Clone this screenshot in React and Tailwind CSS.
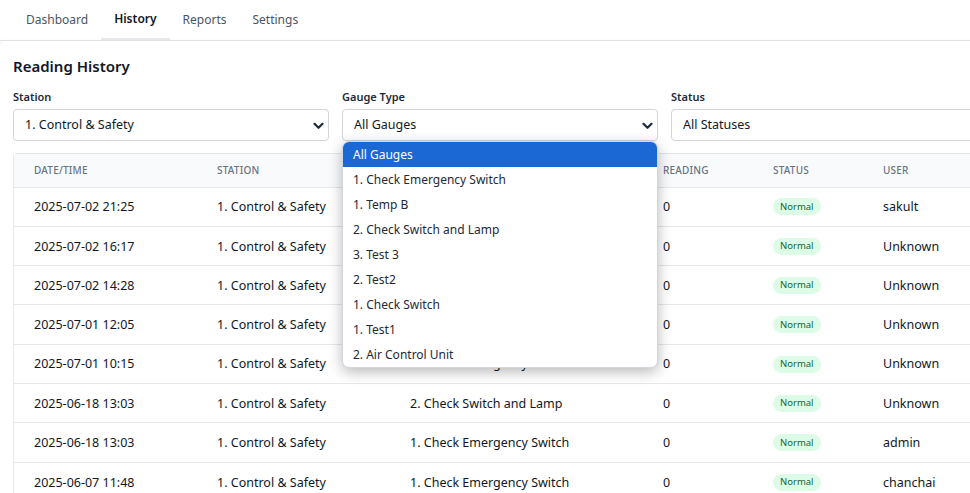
import React from 'react';

const FONT = { fontFamily: '"Segoe UI", "Noto Sans", "Open Sans", sans-serif' };

const tabs = ['Dashboard', 'History', 'Reports', 'Settings'];

const gaugeOptions = [
  'All Gauges',
  '1. Check Emergency Switch',
  '1. Temp B',
  '2. Check Switch and Lamp',
  '3. Test 3',
  '2. Test2',
  '1. Check Switch',
  '1. Test1',
  '2. Air Control Unit',
];

const rows = [
  { time: '2025-07-02 21:25', gauge: '1. Check Emergency Switch', user: 'sakult' },
  { time: '2025-07-02 16:17', gauge: '1. Check Emergency Switch', user: 'Unknown' },
  { time: '2025-07-02 14:28', gauge: '2. Check Switch and Lamp', user: 'Unknown' },
  { time: '2025-07-01 12:05', gauge: '1. Check Emergency Switch', user: 'Unknown' },
  { time: '2025-07-01 10:15', gauge: '1. Check Emergency Switch', user: 'Unknown' },
  { time: '2025-06-18 13:03', gauge: '2. Check Switch and Lamp', user: 'Unknown' },
  { time: '2025-06-18 13:03', gauge: '1. Check Emergency Switch', user: 'admin' },
  { time: '2025-06-07 11:48', gauge: '1. Check Emergency Switch', user: 'chanchai' },
];

const Chevron = () => (
  <svg width="11" height="8" viewBox="0 0 11 8" className="text-gray-800">
    <path d="M1.5 1.8 L5.5 5.8 L9.5 1.8" fill="none" stroke="currentColor" strokeWidth="2.2" strokeLinecap="round" strokeLinejoin="round" />
  </svg>
);

const SelectBox = ({ label, value, chevron = true, children }) => (
  <div className="relative">
    <div className="text-[11px] font-semibold text-gray-800 h-[19px] leading-[14px]">{label}</div>
    <div className="h-[32px] border border-gray-300 rounded-[4px] bg-white flex items-center justify-between pl-[11px] pr-[4px] pt-[1px] text-[12.5px] text-gray-900">
      <span>{value}</span>
      {chevron && <Chevron />}
    </div>
    {children}
  </div>
);

export default function App() {
  return (
    <div className="w-[970px] h-[493px] overflow-hidden bg-white" style={FONT}>
      <div className="w-[1000px]">
        {/* top tabs */}
        <div className="flex h-[41px] border-b border-gray-200 px-[13px]">
          {tabs.map((t) => (
            <div
              key={t}
              className={`px-[13px] flex items-center text-[12px] ${
                t === 'History' ? 'font-semibold text-gray-900 border-b-2 border-gray-200' : 'text-gray-600'
              }`}
            >
              {t}
            </div>
          ))}
        </div>

        {/* main card */}
        <div className="rounded-tl-[6px] shadow-[-2px_0_4px_rgba(0,0,0,0.06)] px-[13px] pt-[14px]">
          <h1 className="text-[15px] font-semibold text-gray-900 leading-[22px] mb-[13px]">Reading History</h1>

          <div className="grid grid-cols-3 gap-[13px]">
            <SelectBox label="Station" value="1. Control & Safety" />
            <SelectBox label="Gauge Type" value="All Gauges">
              <div className="absolute left-0 right-0 top-[51px] z-10 bg-white rounded-[7px] shadow-[0_4px_14px_rgba(0,0,0,0.28)] border border-gray-300 overflow-hidden">
                {gaugeOptions.map((o, i) => (
                  <div
                    key={o}
                    className={`h-[25px] flex items-center px-[10px] text-[12px] ${
                      i === 0 ? 'bg-[#1b67d3] text-white' : 'text-gray-800'
                    }`}
                  >
                    {o}
                  </div>
                ))}
              </div>
            </SelectBox>
            <SelectBox label="Status" value="All Statuses" chevron={false} />
          </div>

          {/* table */}
          <div className="mt-[12px] border border-gray-200 rounded-tl-[4px]">
            <table className="w-full table-fixed border-collapse">
              <colgroup>
                <col className="w-[183px]" />
                <col className="w-[193px]" />
                <col className="w-[253px]" />
                <col className="w-[110px]" />
                <col className="w-[110px]" />
                <col />
              </colgroup>
              <thead>
                <tr className="bg-gray-50 h-[33px]">
                  {['Date/Time', 'Station', 'Gauge', 'Reading', 'Status', 'User'].map((h) => (
                    <th key={h} className="text-left pl-[20px] text-[10px] font-medium uppercase tracking-[0.02em] text-gray-500">
                      {h}
                    </th>
                  ))}
                </tr>
              </thead>
              <tbody>
                {rows.map((r, i) => (
                  <tr key={i} className="h-[39.3px] border-t border-gray-200 text-[12.5px] text-gray-900">
                    <td className="pl-[20px] pt-[2px]">{r.time}</td>
                    <td className="pl-[20px] pt-[2px]">1. Control &amp; Safety</td>
                    <td className="pl-[20px] pt-[2px]">{r.gauge}</td>
                    <td className="pl-[20px] pt-[2px]">0</td>
                    <td className="pl-[20px]">
                      <span className="inline-flex items-center h-[17px] px-[7px] rounded-full bg-[#dcfce7] text-[#166534] text-[9.5px] align-middle">
                        Normal
                      </span>
                    </td>
                    <td className="pl-[20px] pt-[2px]">{r.user}</td>
                  </tr>
                ))}
              </tbody>
            </table>
          </div>
        </div>
      </div>
    </div>
  );
}
